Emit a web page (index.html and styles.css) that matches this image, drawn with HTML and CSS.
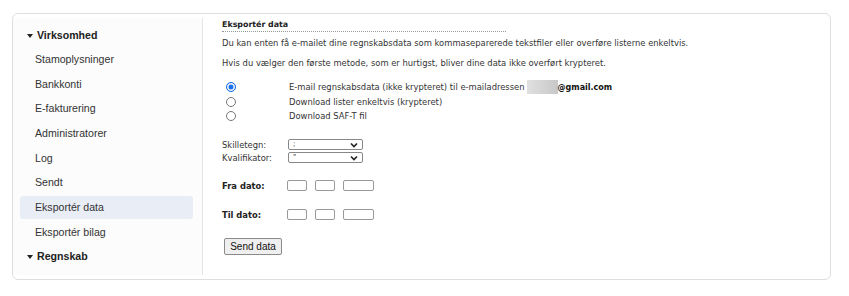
FILE: index.html
```html
<!DOCTYPE html>
<html lang="da">
<head>
    <meta charset="UTF-8">
    <meta name="viewport" content="width=device-width, initial-scale=1.0">
    <title>Eksportér data</title>
    <link rel="stylesheet" href="styles.css">
</head>
<body>
    <div class="card">
        <nav class="sidebar">
            <div class="nav-group"><span class="caret"></span>Virksomhed</div>
            <div class="nav-item">Stamoplysninger</div>
            <div class="nav-item">Bankkonti</div>
            <div class="nav-item">E-fakturering</div>
            <div class="nav-item">Administratorer</div>
            <div class="nav-item">Log</div>
            <div class="nav-item">Sendt</div>
            <div class="nav-item active">Eksportér data</div>
            <div class="nav-item">Eksportér bilag</div>
            <div class="nav-group"><span class="caret"></span>Regnskab</div>
        </nav>

        <main class="content">
            <div class="title">Eksportér data</div>
            <p class="intro">Du kan enten få e-mailet dine regnskabsdata som kommaseparerede tekstfiler eller overføre listerne enkeltvis.</p>
            <p class="intro second">Hvis du vælger den første metode, som er hurtigst, bliver dine data ikke overført krypteret.</p>

            <div class="options">
                <label class="option">
                    <input type="radio" name="method" checked>
                    <span>E-mail regnskabsdata (ikke krypteret) til e-mailadressen<span class="blur"></span><b>@gmail.com</b></span>
                </label>
                <label class="option">
                    <input type="radio" name="method">
                    <span>Download lister enkeltvis (krypteret)</span>
                </label>
                <label class="option">
                    <input type="radio" name="method">
                    <span>Download SAF-T fil</span>
                </label>
            </div>

            <div class="selects">
                <div class="field">
                    <span class="label">Skilletegn:</span>
                    <span class="select">
                        <select><option>;</option></select>
                        <svg viewBox="0 0 8 6" width="8" height="6"><path d="M1 1.5 L4 4.5 L7 1.5" fill="none" stroke="#222" stroke-width="1.6"/></svg>
                    </span>
                </div>
                <div class="field">
                    <span class="label">Kvalifikator:</span>
                    <span class="select">
                        <select><option>"</option></select>
                        <svg viewBox="0 0 8 6" width="8" height="6"><path d="M1 1.5 L4 4.5 L7 1.5" fill="none" stroke="#222" stroke-width="1.6"/></svg>
                    </span>
                </div>
            </div>

            <div class="date-row">
                <span class="label bold">Fra dato:</span>
                <input class="d2" type="text">
                <input class="d2" type="text">
                <input class="d4" type="text">
            </div>
            <div class="date-row til">
                <span class="label bold">Til dato:</span>
                <input class="d2" type="text">
                <input class="d2" type="text">
                <input class="d4" type="text">
            </div>

            <button class="send">Send data</button>
        </main>
    </div>
</body>
</html>
```

FILE: styles.css
```css
body {
    margin: 0;
    padding: 13px 0 0 12px;
    background: #fff;
    font-family: 'Liberation Sans', Arial, sans-serif;
}
.card {
    width: 817px;
    height: 265px;
    border: 1px solid #dedede;
    border-radius: 6px;
    display: flex;
    background: #fff;
}

/* sidebar */
.sidebar {
    width: 173px;
    margin: 4px 0;
    padding: 5.5px 9px 0 7px;
    border-right: 1px solid #e4e4e4;
    background: #fcfcfc;
    font-size: 10.6px;
    color: #333;
}
.nav-group,
.nav-item {
    height: 23px;
    line-height: 23px;
    margin-bottom: 1.67px;
    border-radius: 3px;
}
.nav-item {
    padding-left: 15px;
}
.nav-group {
    font-weight: bold;
    color: #222;
    padding-left: 7px;
}
.caret {
    display: inline-block;
    width: 0;
    height: 0;
    border-left: 3.5px solid transparent;
    border-right: 3.5px solid transparent;
    border-top: 4.5px solid #222;
    margin-right: 4px;
    vertical-align: 1px;
}
.nav-item.active {
    background: #e9edf6;
}

/* content */
.content {
    flex: 1;
    padding: 6px 19px 0 19px;
    font-family: 'DejaVu Sans', Verdana, sans-serif;
    font-size: 8.4px;
    color: #333;
}
.title {
    width: 284px;
    font-size: 7.9px;
    font-weight: bold;
    color: #222;
    line-height: 10px;
    padding-bottom: 1px;
    border-bottom: 1px dotted #999;
}
.intro {
    margin: 6px 0 0;
    line-height: 10px;
}
.intro.second {
    margin-top: 10px;
}
.options {
    margin-top: 12px;
}
.option {
    display: flex;
    align-items: center;
    height: 14.5px;
}
.option input {
    appearance: none;
    margin: 0 53px 0 4px;
    width: 10px;
    height: 10px;
    border: 1px solid #777;
    border-radius: 50%;
    background: #fff;
    box-sizing: border-box;
}
.option input:checked {
    border-color: #1a73e8;
    background: #1a73e8;
    box-shadow: inset 0 0 0 1.5px #fff;
}
.blur {
    display: inline-block;
    width: 31px;
    height: 14px;
    margin: 0 0 0 2px;
    vertical-align: middle;
    background: linear-gradient(90deg, #e0e0e0, #c8c8c8);
}
.option b {
    color: #111;
    font-size: 8px;
}

.selects {
    margin-top: 14.5px;
}
.field {
    display: flex;
    align-items: center;
    height: 13px;
}
.label {
    width: 66px;
    flex-shrink: 0;
}
.bold {
    font-weight: bold;
    color: #222;
}
.select {
    position: relative;
    display: inline-block;
}
.select select {
    appearance: none;
    width: 75px;
    height: 11px;
    padding: 0 0 0 4px;
    border: 1px solid #888;
    border-radius: 2px;
    background: #fff;
    font-family: 'DejaVu Sans', Verdana, sans-serif;
    font-size: 7px;
    line-height: 9px;
    color: #222;
    display: block;
}
.select svg {
    position: absolute;
    right: 5px;
    top: 2.5px;
}

.date-row {
    display: flex;
    align-items: center;
    height: 14px;
    margin-top: 14.5px;
    gap: 8px;
}
.date-row.til {
    margin-top: 15px;
}
.date-row .label {
    margin-right: -9px;
}
.date-row input {
    height: 11px;
    border: 1px solid #999;
    border-radius: 2px;
    padding: 0;
    box-sizing: border-box;
    background: #fff;
}
.d2 {
    width: 20px;
}
.d4 {
    width: 31px;
}

.send {
    margin: 16px 0 0 2px;
    width: 58px;
    height: 17px;
    padding: 0;
    font-family: 'Liberation Sans', Arial, sans-serif;
    font-size: 10px;
    color: #111;
    background: #efefef;
    border: 1px solid #8a8a8a;
    border-radius: 2px;
}
```
